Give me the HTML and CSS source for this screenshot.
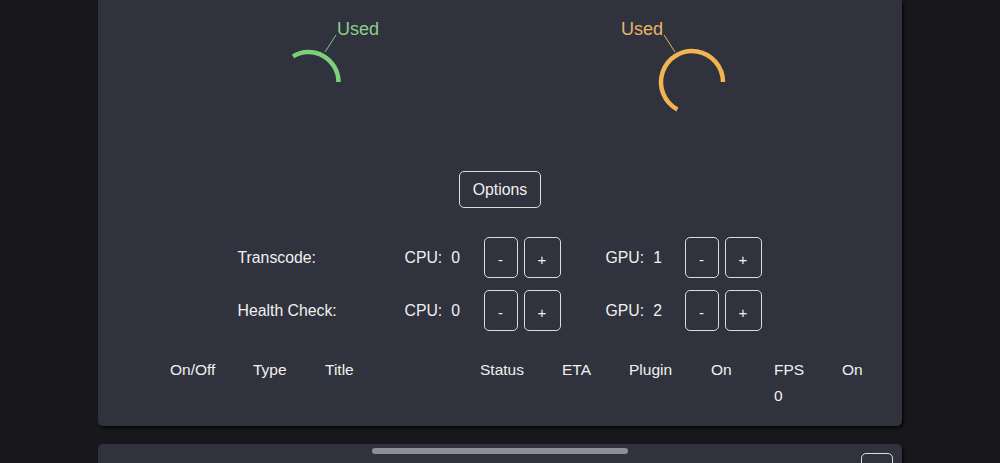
FILE: index.html
```html
<!DOCTYPE html>
<html lang="en">

<head>
    <meta charset="UTF-8" />
    <title>Workers</title>
    <link rel="stylesheet" href="styles.css">
</head>

<body>
    <div class="page">

        <div class="card">
            <!-- usage pies -->
            <div class="gauges">
                <svg class="gauge" width="402" height="140" viewBox="0 0 402 140">
                    <path class="arc green" d="M 195 56.4 A 30 30 0 0 1 240.5 82" />
                    <polyline class="leader green" points="227,52 238,35" />
                    <text class="gauge-label green" x="239" y="35">Used</text>
                </svg>
                <svg class="gauge" width="402" height="140" viewBox="0 0 402 140">
                    <path class="arc orange" d="M 223 82 A 31 31 0 1 0 177.4 109.4" />
                    <polyline class="leader orange" points="175,52 164,35" />
                    <text class="gauge-label orange" x="163" y="35" text-anchor="end">Used</text>
                </svg>
            </div>

            <div class="options">
                <button class="btn">Options</button>
            </div>

            <div class="workers">
                <div class="worker-row">
                    <span class="worker-name">Transcode:</span>
                    <span class="count">CPU:<span class="num">0</span></span>
                    <span class="btns"><button class="btn small">-</button><button class="btn small">+</button></span>
                    <span class="count">GPU:<span class="num">1</span></span>
                    <span class="btns last"><button class="btn small">-</button><button class="btn small">+</button></span>
                </div>
                <div class="worker-row">
                    <span class="worker-name">Health Check:</span>
                    <span class="count">CPU:<span class="num">0</span></span>
                    <span class="btns"><button class="btn small">-</button><button class="btn small">+</button></span>
                    <span class="count">GPU:<span class="num">2</span></span>
                    <span class="btns last"><button class="btn small">-</button><button class="btn small">+</button></span>
                </div>
            </div>

            <div class="queue">
                <div>On/Off</div>
                <div>Type</div>
                <div>Title</div>
                <div>Status</div>
                <div>ETA</div>
                <div>Plugin</div>
                <div>On</div>
                <div>FPS<br>0</div>
                <div>On</div>
            </div>
        </div>

        <div class="card next">
            <button class="btn corner"></button>
        </div>
    </div>

    <div class="home-bar"></div>
</body>

</html>
```

FILE: styles.css
```css
body {
    margin: 0;
    background-color: #18181c;
    font-family: "Liberation Sans", Arial, sans-serif;
    color: #f0f0f0;
    overflow: hidden;
}

.page {
    width: 804px;
    margin: 0 auto;
}

.card {
    background-color: #30333d;
    border-radius: 0 0 5px 5px;
    box-shadow: 2px 2px 3px rgba(0, 0, 0, 0.7);
    height: 426px;
    box-sizing: border-box;
}

.card.next {
    margin-top: 18px;
    height: 120px;
    border-radius: 5px;
    display: flex;
    justify-content: flex-end;
    padding: 9px 9px 0 0;
}

.gauges {
    display: flex;
    height: 140px;
}

.gauge {
    display: block;
}

.arc {
    fill: none;
    stroke-width: 4.5;
}

.arc.green {
    stroke: #7dd07a;
}

.arc.orange {
    stroke: #f2b452;
}

.leader {
    fill: none;
    stroke-width: 1;
}

.leader.green {
    stroke: #86c984;
}

.leader.orange {
    stroke: #e4b062;
}

.gauge-label {
    font-family: "Liberation Sans", Arial, sans-serif;
    font-size: 18px;
}

.gauge-label.green {
    fill: #8ccf89;
}

.gauge-label.orange {
    fill: #eab465;
}

.btn {
    background: transparent;
    color: #f0f0f0;
    border: 1px solid #dcdcdc;
    border-radius: 5px;
    font-family: "Liberation Sans", Arial, sans-serif;
    font-size: 15.8px;
    cursor: pointer;
}

.options {
    display: flex;
    justify-content: center;
    margin-top: 31px;
}

.options .btn {
    width: 82px;
    height: 37px;
    padding: 0;
}

.workers {
    margin-top: 29px;
    display: flex;
    flex-direction: column;
    gap: 12px;
}

.worker-row {
    display: flex;
    justify-content: center;
    align-items: center;
    height: 41px;
    font-size: 15.8px;
}

.worker-name {
    width: 167px;
}

.count {
    width: 79px;
}

.count .num {
    margin-left: 9px;
}

.btns {
    width: 122px;
    display: flex;
    gap: 6px;
}

.btns.last {
    width: 78px;
}

.btn.small {
    height: 41px;
    padding: 12px 0 8px;
    font-size: 15px;
}

.btn.small:first-child {
    width: 34px;
}

.btn.small:last-child {
    width: 37px;
}

.queue {
    margin-top: 26px;
    padding-left: 72px;
    display: grid;
    grid-template-columns: 83px 72px 155px 82px 67px 82px 63px 68px auto;
    font-size: 15.5px;
    line-height: 26px;
}

.btn.corner {
    width: 32px;
    height: 40px;
    padding: 0;
}

/* iOS home indicator */
.home-bar {
    position: fixed;
    left: 372px;
    bottom: 9px;
    width: 256px;
    height: 6px;
    border-radius: 3px;
    background-color: #8d8f98;
}
```
